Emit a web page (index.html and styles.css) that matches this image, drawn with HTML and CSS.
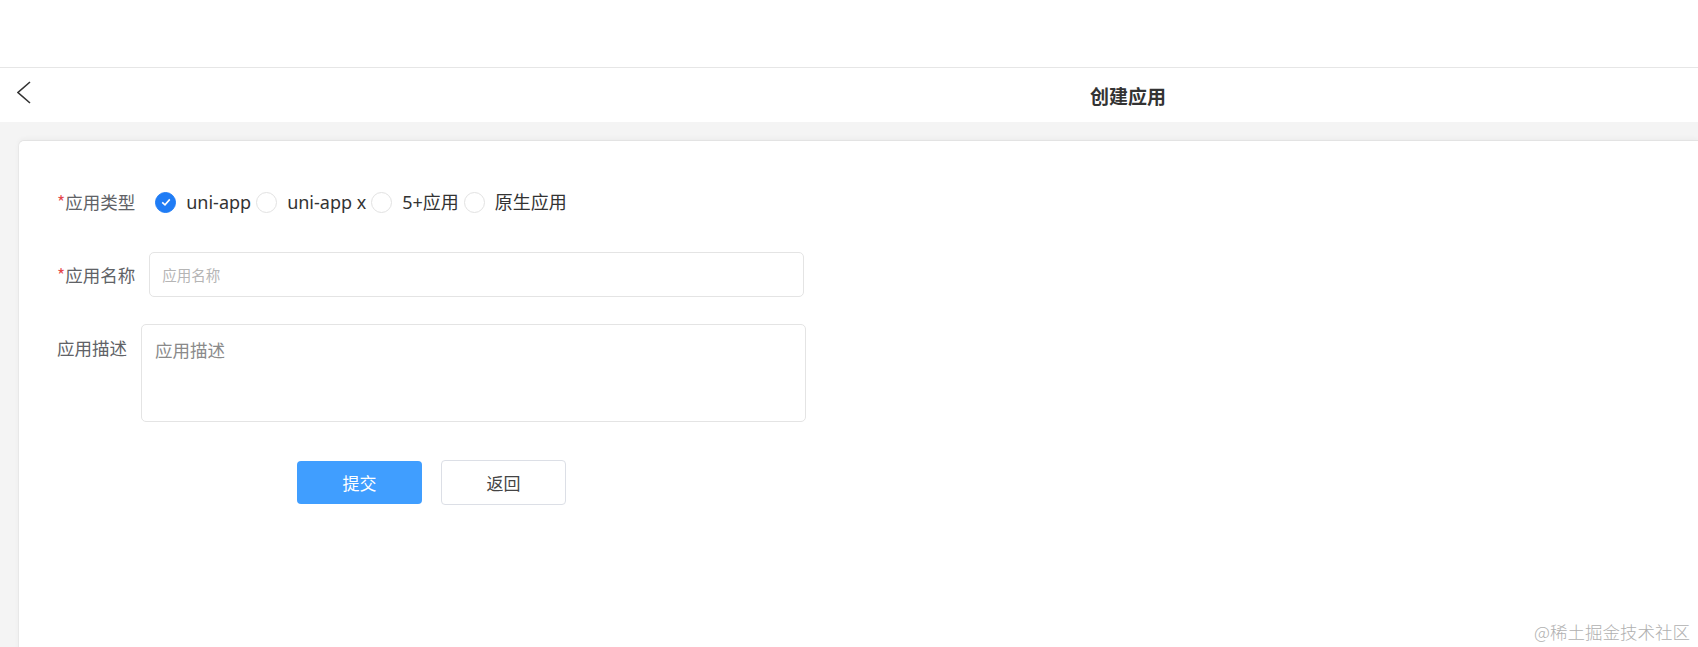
FILE: index.html
```html
<!DOCTYPE html>
<html>
<head>
<meta charset="utf-8">
<link rel="stylesheet" href="styles.css">
</head>
<body>
    <div class="topbar"></div>

    <div class="nav">
        <a class="back" href="#">
            <svg width="14" height="23" viewBox="0 0 14 23">
                <polyline points="13,1 1,11.5 13,22" fill="none" stroke="#333" stroke-width="1.6"/>
            </svg>
        </a>
        <div class="nav-title">创建应用</div>
    </div>

    <div class="main">
        <div class="card">
            <div class="form">
                <div class="row">
                    <label class="label"><span class="req">*</span>应用类型</label>
                    <div class="radios">
                        <span class="radio checked">
                            <svg width="12" height="12" viewBox="0 0 12 12">
                                <polyline points="2.2,6.3 5,8.8 9.8,3.4" fill="none" stroke="#fff" stroke-width="1.6"/>
                            </svg>
                        </span>
                        <span class="radio-text">uni-app</span>
                        <span class="radio"></span>
                        <span class="radio-text">uni-app x</span>
                        <span class="radio"></span>
                        <span class="radio-text">5+应用</span>
                        <span class="radio"></span>
                        <span class="radio-text">原生应用</span>
                    </div>
                </div>

                <div class="row row-name">
                    <label class="label"><span class="req">*</span>应用名称</label>
                    <input class="input" type="text" placeholder="应用名称">
                </div>

                <div class="row row-desc">
                    <label class="label label-top">应用描述</label>
                    <textarea class="textarea" placeholder="应用描述"></textarea>
                </div>

                <div class="row row-btns">
                    <button class="btn btn-primary">提交</button>
                    <button class="btn btn-default">返回</button>
                </div>
            </div>
        </div>
    </div>

    <div class="watermark">@稀土掘金技术社区</div>
</body>
</html>
```

FILE: styles.css
```css
html, body {
    margin: 0;
    padding: 0;
    height: 100%;
}
body {
    position: relative;
    overflow: hidden;
    background: #fff;
    font-family: "Noto Sans", "Noto Sans CJK SC", sans-serif;
    color: #333;
}
.topbar {
    height: 67px;
    border-bottom: 1px solid #e6e6e6;
}
.nav {
    display: grid;
    grid-template-columns: 1090px auto;
    align-items: center;
    height: 54px;
    background: #fff;
}
.back {
    display: flex;
    padding-left: 17px;
    margin-bottom: 5px;
}
.nav-title {
    font-family: "Noto Sans CJK SC", sans-serif;
    font-size: 19px;
    font-weight: 700;
    color: #333;
}
.main {
    height: 525px;
    padding: 18px 0 0 18px;
    background: #f4f4f4;
}
.card {
    height: 100%;
    background: #fff;
    border-top: 1px solid #e3e3e3;
    border-left: 1px solid #e8e8e8;
    border-top-left-radius: 6px;
    box-shadow: 0 -2px 4px rgba(0,0,0,0.03);
}
.form {
    display: flex;
    flex-direction: column;
    padding: 38px 0 0 38px;
}
.row {
    display: flex;
    align-items: center;
    height: 46px;
}
.label {
    margin-right: 14px;
    font-family: "Noto Sans CJK SC", sans-serif;
    font-size: 17.5px;
    line-height: 24px;
    color: #606266;
}
.req {
    color: #e5484d;
}
.radios {
    display: flex;
    align-items: center;
    margin-left: 6px;
}
.radio {
    display: flex;
    align-items: center;
    justify-content: center;
    box-sizing: border-box;
    width: 21px;
    height: 21px;
    border: 1px solid #e2e2e2;
    border-radius: 50%;
    background: #fff;
}
.radio.checked {
    border-color: #1f7cf5;
    background: #1f7cf5;
}
.radio-text {
    margin: 0 5px 0 10px;
    font-size: 18px;
    line-height: 24px;
    color: #333;
}
.row-name {
    height: 45px;
    margin-top: 27px;
}
.input {
    box-sizing: border-box;
    width: 655px;
    height: 45px;
    padding: 0 12px;
    border: 1px solid #e4e4e4;
    border-radius: 5px;
    outline: none;
    font-family: "Noto Sans CJK SC", sans-serif;
    font-size: 14.5px;
}
.input::placeholder {
    color: #b5b5b5;
}
.row-desc {
    align-items: flex-start;
    height: 98px;
    margin-top: 27px;
}
.label-top {
    margin-top: 12px;
}
.textarea {
    box-sizing: border-box;
    width: 665px;
    height: 98px;
    padding: 13px 13px;
    border: 1px solid #e4e4e4;
    border-radius: 5px;
    outline: none;
    resize: none;
    font-family: "Noto Sans CJK SC", sans-serif;
    font-size: 17.5px;
    line-height: 24px;
}
.textarea::placeholder {
    color: #8a8a8a;
}
.row-btns {
    margin-top: 37px;
    padding-left: 240px;
    gap: 19px;
}
.btn {
    box-sizing: border-box;
    width: 125px;
    font-family: "Noto Sans CJK SC", sans-serif;
    font-size: 17px;
    border-radius: 4px;
    cursor: pointer;
}
.btn-primary {
    height: 43px;
    border: none;
    background: #409eff;
    color: #fff;
}
.btn-default {
    height: 45px;
    border: 1px solid #dcdfe6;
    background: #fff;
    color: #444;
}
.watermark {
    position: absolute;
    right: 8px;
    bottom: 3px;
    font-family: "Noto Sans CJK SC", sans-serif;
    font-size: 17.5px;
    font-weight: 300;
    line-height: 24px;
    color: #b0b0b0;
}
```
